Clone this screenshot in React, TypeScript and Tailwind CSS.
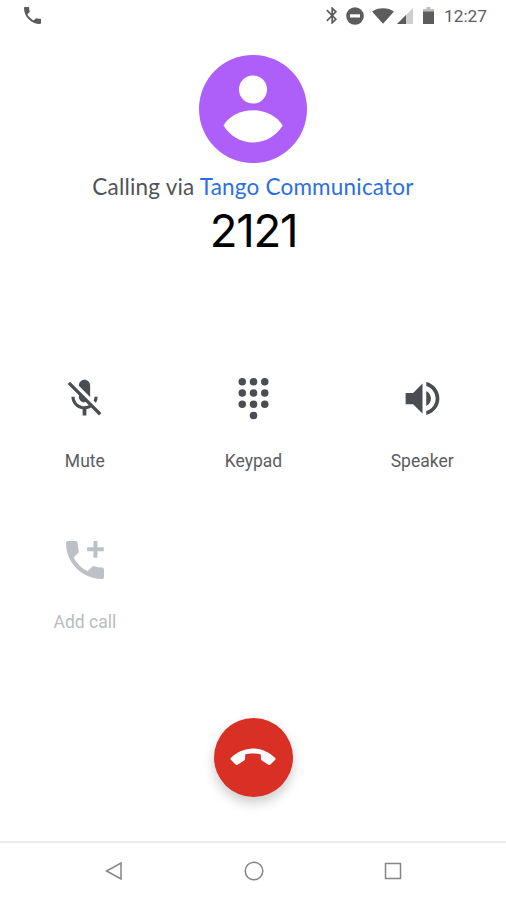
import type { ReactNode } from "react";

interface CallActionProps {
  label: string;
  disabled?: boolean;
  children: ReactNode;
}

const CallAction = ({ label, disabled, children }: CallActionProps) => {
  return (
    <button
      disabled={disabled}
      className={`flex h-[161px] w-full flex-col items-center ${
        disabled ? "text-[#bdc1c6]" : "text-[#4a4d51]"
      }`}
    >
      <span className="flex h-[46px] items-center justify-center pl-px pt-px">{children}</span>
      <span
        className={`mt-[28px] pl-px text-[17.5px] leading-6 ${
          disabled ? "text-[#b9bcc0]" : "text-[#5a5d61]"
        }`}
      >
        {label}
      </span>
    </button>
  );
};

const phonePath =
  "M6.62 10.79c1.44 2.83 3.76 5.14 6.59 6.59l2.2-2.2c.27-.27.67-.36 1.02-.24 1.12.37 2.33.57 3.57.57.55 0 1 .45 1 1V20c0 .55-.45 1-1 1-9.39 0-17-7.61-17-17 0-.55.45-1 1-1h3.5c.55 0 1 .45 1 1 0 1.25.2 2.45.57 3.57.11.35.03.74-.25 1.02l-2.2 2.2z";

const StatusBar = () => {
  return (
    <header className="flex h-8 items-center justify-between pl-[24px] pr-[19px] text-[#5c5c5c]">
      <svg className="mt-[-2px] size-[17px]" viewBox="3 3 18 18" fill="currentColor">
        <path d={phonePath} />
      </svg>
      <div className="flex items-center">
        <svg className="mt-[-1px] h-[17px] w-[12px]" viewBox="5 2 13.5 20" fill="currentColor">
          <path d="M17.71 7.71 12 2h-1v7.59L6.41 5 5 6.41 10.59 12 5 17.59 6.41 19 11 14.41V22h1l5.71-5.71-4.3-4.29 4.3-4.29zM13 5.83l1.88 1.88L13 9.59V5.83zm1.88 10.46L13 18.17v-3.76l1.88 1.88z" />
        </svg>
        <svg className="ml-[8px] mr-px mt-[-1px] size-[18px]" viewBox="0 0 18 18">
          <circle cx="9" cy="9" r="8.8" fill="currentColor" />
          <rect x="4" y="7.3" width="10" height="3.2" fill="#fff" />
        </svg>
        <svg className="ml-[7px] mr-px mt-[-1px] h-[16px] w-[22px]" viewBox="0 0 22 16" fill="currentColor">
          <path d="M11 15.8 0 3.6C3 1.4 6.8.2 11 .2s8 1.2 11 3.4z" />
        </svg>
        <svg className="ml-[2px] mr-px mt-[-1px] size-[16px]" viewBox="0 0 16 16" fill="currentColor">
          <path d="M16 0v16H0z" opacity=".3" />
          <path d="M9 7v9H0z" />
        </svg>
        <svg className="ml-[9px] mr-px mt-[-1px] h-[17px] w-[11px]" viewBox="0 0 11 17" fill="currentColor">
          <path d="M3.5 0h4v2H11v3H0V2h3.5z" opacity=".4" />
          <path d="M0 4.5h11V17H0z" />
        </svg>
        <span className="ml-[9px] text-[17.3px] leading-8">12:27</span>
      </div>
    </header>
  );
};

const NavigationBar = () => {
  return (
    <nav className="flex h-[59px] items-center justify-between border-t-2 border-[#ebebeb] pb-[2px] pl-[104px] pr-[103px] text-[#858585]">
      <svg className="size-5" viewBox="0 0 20 20" fill="none" stroke="currentColor" strokeWidth="1.5">
        <path d="M17 2v16L2.5 10z" />
      </svg>
      <svg className="size-5" viewBox="0 0 20 20" fill="none" stroke="currentColor" strokeWidth="1.5">
        <circle cx="10" cy="10" r="8.8" />
      </svg>
      <svg className="size-5" viewBox="0 0 20 20" fill="none" stroke="currentColor" strokeWidth="1.5">
        <rect x="2.5" y="2.5" width="15" height="15" />
      </svg>
    </nav>
  );
};

const App = () => {
  return (
    <div className="flex h-[900px] w-[506px] flex-col bg-white font-['Roboto',sans-serif]">
      <StatusBar />

      <section className="flex h-[343px] flex-col items-center pt-[23px]">
        <svg className="size-[108px] shrink-0" viewBox="0 0 108 108">
          <circle cx="54" cy="54" r="54" fill="#ae5ffa" />
          <circle cx="54" cy="34.5" r="14" fill="#fff" />
          <path d="M24.5 70.5C30 61 42 55.3 54 55.3S78 61 83.7 70.5C77 81 66 87.5 54 87.5S31 81 24.5 70.5z" fill="#fff" />
        </svg>
        <p className="mt-[10px] whitespace-nowrap font-['Lato',sans-serif] text-[22.5px] leading-7 tracking-[0.2px] text-[#505357]">
          Calling via <span className="text-[#2d6fe0]">Tango Communicator</span>
        </p>
        <h1 className="mt-px pl-px font-['Inter',sans-serif] text-[45.5px] leading-[58px] tracking-[-1.2px] text-black">
          2121
        </h1>
      </section>

      <section className="grid h-[322px] grid-cols-3">
        <CallAction label="Mute">
          <svg className="size-[45px]" viewBox="0 0 24 24" fill="currentColor">
            <path d="M19 11h-1.7c0 .74-.16 1.43-.43 2.05l1.23 1.23c.56-.98.9-2.09.9-3.28zm-4.02.17c0-.06.02-.11.02-.17V5c0-1.66-1.34-3-3-3S9 3.34 9 5v.18l5.98 5.99zM4.27 3 3 4.27l6.01 6.01V11c0 1.66 1.33 3 2.99 3 .22 0 .44-.03.65-.08l1.66 1.66c-.71.33-1.5.52-2.31.52-2.76 0-5.3-2.1-5.3-5.1H5c0 3.41 2.72 6.23 6 6.72V21h2v-3.28c.91-.13 1.77-.45 2.54-.9L19.73 21 21 19.73 4.27 3z" />
          </svg>
        </CallAction>
        <CallAction label="Keypad">
          <svg className="size-[45px]" viewBox="0 0 24 24" fill="currentColor">
            {[3, 9, 15].map((cy) =>
              [6, 12, 18].map((cx) => <circle key={`${cx}-${cy}`} cx={cx} cy={cy} r="2" />)
            )}
            <circle cx="12" cy="21" r="2" />
          </svg>
        </CallAction>
        <CallAction label="Speaker">
          <svg className="size-[45px]" viewBox="0 0 24 24" fill="currentColor">
            <path d="M3 9v6h4l5 5V4L7 9H3zm13.5 3c0-1.77-1.02-3.29-2.5-4.03v8.05c1.48-.73 2.5-2.25 2.5-4.02zM14 3.23v2.06c2.89.86 5 3.54 5 6.71s-2.11 5.85-5 6.71v2.06c4.01-.91 7-4.49 7-8.77s-2.99-7.86-7-8.77z" />
          </svg>
        </CallAction>
        <CallAction label="Add call" disabled>
          <svg className="size-[38px]" viewBox="3 3 18 18" fill="currentColor">
            <path d={phonePath} />
            <path d="M16 3h1.9v3h3v1.9h-3v3H16v-3h-3V6h3z" />
          </svg>
        </CallAction>
      </section>

      <section className="flex flex-1 justify-center pt-[21px]">
        <button
          aria-label="End call"
          className="flex size-[79px] items-center justify-center rounded-full bg-[#d93025] text-white shadow-[0_6px_12px_rgba(0,0,0,0.2)]"
        >
          <svg className="mt-[-2px] h-[18px] w-[46px]" viewBox="0 0 46 18" fill="currentColor">
            <path d="M23 .5C15 .5 7 4 .8 10c-.5.6-.5 1.2 0 1.8l4.8 4.8c.6.6 1.3.7 2 .2l6.9-4.6c.4-.3.6-.7.6-1.2V6.5C17.5 5.7 20 5.4 23 5.4s5.5.3 7.9 1.1V11c0 .5.2.9.6 1.2l6.9 4.6c.7.5 1.4.4 2-.2l4.8-4.8c.5-.6.5-1.2 0-1.8C39 4 31 .5 23 .5z" />
          </svg>
        </button>
      </section>

      <NavigationBar />
    </div>
  );
};

export default App;
